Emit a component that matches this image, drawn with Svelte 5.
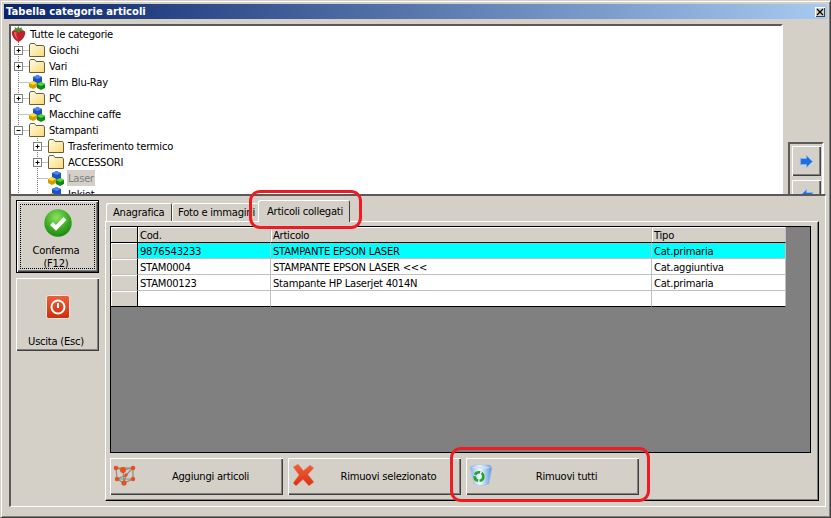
<script>
  const rows = [
    { level: 1, kind: 'folder', exp: '+', label: 'Giochi' },
    { level: 1, kind: 'folder', exp: '+', label: 'Vari' },
    { level: 1, kind: 'cubes', exp: '', label: 'Film Blu-Ray' },
    { level: 1, kind: 'folder', exp: '+', label: 'PC' },
    { level: 1, kind: 'cubes', exp: '', label: 'Macchine caffe' },
    { level: 1, kind: 'folder', exp: '-', label: 'Stampanti' },
    { level: 2, kind: 'folder', exp: '+', label: 'Trasferimento termico' },
    { level: 2, kind: 'folder', exp: '+', label: 'ACCESSORI' },
    { level: 2, kind: 'cubes', exp: '', label: 'Laser', selected: true },
    { level: 2, kind: 'cubes', exp: '', label: 'Inkjet' }
  ];

  const articles = [
    { cod: '9876543233', name: 'STAMPANTE EPSON LASER', tipo: 'Cat.primaria', active: true },
    { cod: 'STAM0004', name: 'STAMPANTE EPSON LASER <<<', tipo: 'Cat.aggiuntiva' },
    { cod: 'STAM00123', name: 'Stampante HP Laserjet 4014N', tipo: 'Cat.primaria' },
    { cod: '', name: '', tipo: '' }
  ];

  const prefixWidth = (level) => (level === 1 ? 18 : 37);
  const expX = (level) => (level === 1 ? 7.5 : 26.5);
</script>

<div class="window">
  <div class="title">
    <span>Tabella categorie articoli</span>
    <div class="close">
      <svg width="8" height="8" viewBox="0 0 8 8"><path d="M1 1l6 6M7 1l-6 6" stroke="#000" stroke-width="1.3" fill="none" /></svg>
    </div>
  </div>

  <div class="top">
    <div class="tree">
      <div class="row">
        <svg class="berry" width="16" height="16" viewBox="0 0 16 16">
          <path d="M1 5.500C3 3.500 12 3.500 14 5.500C15 9 12 14 7.500 16C3 14 0 9 1 5.500Z" fill="#c0202a" />
          <path d="M3 6C2.500 9 5 12 7 14C5.500 10 5 8 5.500 6Z" fill="#e8555a" />
          <path d="M1.500 4.500L4 3L3.500 1L6 2.500L7.500 0L8.500 2.500L11 1L10.500 3L13 4.500L9.500 5L7.500 6.500L5.500 5Z" fill="#4a8a2a" />
        </svg>
        <span class="label root">Tutte le categorie</span>
      </div>

      {#each rows as r}
        <div class="row">
          <svg class="prefix" width={prefixWidth(r.level)} height="16">
            <line x1="7.5" y1="0" x2="7.5" y2="16" class="dots" />
            {#if r.level === 2}
              <line x1="26.5" y1="0" x2="26.5" y2="16" class="dots" />
            {/if}
            <line x1={expX(r.level)} y1="8.5" x2={prefixWidth(r.level)} y2="8.5" class="dots" />
            {#if r.exp}
              <rect x={expX(r.level) - 4} y="4.500" width="8" height="8" fill="#fff" stroke="#808080" />
              <path d="M{expX(r.level) - 2} 8.500h4" stroke="#000" />
              {#if r.exp === '+'}
                <path d="M{expX(r.level)} 6.500v4" stroke="#000" />
              {/if}
            {/if}
          </svg>
          {#if r.kind === 'folder'}
            <svg class="icon" width="16" height="16" viewBox="0 0 16 16">
              <defs>
                <linearGradient id="fold" x1="0" y1="0" x2="1" y2="1">
                  <stop offset="0" stop-color="#fffde8" />
                  <stop offset="1" stop-color="#fbd873" />
                </linearGradient>
              </defs>
              <path d="M0.500 14.500V3L1.500 1.500H5.500L7 3.500H14.500L15.500 5V14.500Z" fill="url(#fold)" stroke="#6b5f33" />
            </svg>
          {:else}
            <svg class="icon" width="16" height="16" viewBox="0 0 16 16">
              <path d="M4 3L8.500 1L13 3V8L8.500 10L4 8Z" fill="#1a50c8" />
              <path d="M4 3L8.500 5L13 3L8.500 1Z" fill="#4a88ea" />
              <path d="M0 9L4 7L8 9V13L4 15L0 13Z" fill="#d0a000" />
              <path d="M0 9L4 11L8 9L4 7Z" fill="#ffdc40" />
              <path d="M8 10L12 8L16 10V14L12 16L8 14Z" fill="#128a12" />
              <path d="M8 10L12 12L16 10L12 8Z" fill="#58d040" />
            </svg>
          {/if}
          <span class="label" class:selected={r.selected}>{r.label}</span>
        </div>
      {/each}
    </div>

    <div class="movers">
      <div class="mover">
        <svg width="13" height="13" viewBox="0 0 13 13">
          <path d="M0.500 3.500H6.500V0.500L12.500 6.500L6.500 12.500V9.500H0.500Z" fill="#1f6fe0" stroke="#7fb2f2" />
        </svg>
      </div>
      <div class="mover">
        <svg width="13" height="13" viewBox="0 0 13 13">
          <path d="M12.500 3.500H6.500V0.500L0.500 6.500L6.500 12.500V9.500H12.500Z" fill="#1f6fe0" stroke="#7fb2f2" />
        </svg>
      </div>
    </div>
  </div>

  <div class="panel">
    <div class="side">
      <button class="big focused">
        <svg width="28" height="28" viewBox="0 0 28 28">
          <defs>
            <radialGradient id="ok" cx="0.45" cy="0.3" r="0.8">
              <stop offset="0" stop-color="#8fe05f" />
              <stop offset="0.6" stop-color="#34a51f" />
              <stop offset="1" stop-color="#157a12" />
            </radialGradient>
          </defs>
          <circle cx="14" cy="14" r="13.700" fill="url(#ok)" />
          <path d="M7.500 14.500L12 19L21 9.500" fill="none" stroke="#fff" stroke-width="4" />
        </svg>
        <span class="big-text">Conferma<br />(F12)</span>
        <i class="focus-ring"></i>
      </button>
      <button class="big">
        <svg width="24" height="24" viewBox="0 0 24 24">
          <defs>
            <linearGradient id="off" x1="0" y1="0" x2="0" y2="1">
              <stop offset="0" stop-color="#f0603a" />
              <stop offset="1" stop-color="#c8300c" />
            </linearGradient>
          </defs>
          <rect x="0.500" y="0.500" width="23" height="23" rx="2" fill="url(#off)" stroke="#f7e4da" />
          <circle cx="12" cy="12" r="6.500" fill="none" stroke="#fff" stroke-width="2" />
          <path d="M12 8v5" stroke="#fff" stroke-width="2" />
        </svg>
        <span class="big-text low">Uscita (Esc)</span>
      </button>
    </div>

    <div class="tabs-area">
      <div class="tabs">
        <div class="tab first">Anagrafica</div>
        <div class="tab second">Foto e immagini</div>
        <div class="tab current">Articoli collegati</div>
      </div>

      <div class="page">
        <div class="grid">
          <div class="table">
            <div class="cell ind head"></div>
            <div class="cell head">Cod.</div>
            <div class="cell head">Articolo</div>
            <div class="cell head">Tipo</div>
            {#each articles as a, i}
              <div class="cell ind" class:last={i === articles.length - 1}></div>
              <div class="cell" class:cyan={a.active} class:last={i === articles.length - 1}>{a.cod}</div>
              <div class="cell" class:cyan={a.active} class:last={i === articles.length - 1}>{a.name}</div>
              <div class="cell" class:cyan={a.active} class:last={i === articles.length - 1}>{a.tipo}</div>
            {/each}
          </div>
        </div>

        <div class="actions">
          <button class="action">
            <svg width="26" height="26" viewBox="0 0 26 26">
              <path d="M4 4H21V15H5ZM4 4L11 6L21 4M11 6L12 19M5 15L12 19L21 15M14 11L21 4M14 11L5 15M14 11L12 19" fill="none" stroke="#8c8c84" stroke-width="1.200" />
              <g fill="#e8501a">
                <circle cx="4" cy="4" r="2.300" />
                <circle cx="21" cy="4" r="2.300" />
                <circle cx="11" cy="6" r="3" />
                <circle cx="14" cy="11" r="1.700" />
                <circle cx="5" cy="15" r="2.200" />
                <circle cx="21" cy="15" r="2.200" />
                <circle cx="12" cy="19" r="2.600" />
              </g>
            </svg>
            <span>Aggiungi articoli</span>
          </button>
          <button class="action">
            <svg width="26" height="26" viewBox="0 0 26 26">
              <defs>
                <linearGradient id="cross" x1="0" y1="0" x2="0" y2="1">
                  <stop offset="0" stop-color="#f2603a" />
                  <stop offset="1" stop-color="#d8320f" />
                </linearGradient>
              </defs>
              <path d="M3 3L8 0L13.500 6.500L20 1L24 4L18 10.500L24 18L19 22L13 15.500L6 22L3 19L9 11Z" fill="url(#cross)" stroke="#e0a090" stroke-width="0.500" />
            </svg>
            <span>Rimuovi selezionato</span>
          </button>
          <button class="action">
            <svg width="26" height="26" viewBox="0 0 26 26">
              <defs>
                <linearGradient id="bin" x1="0" y1="0" x2="1" y2="0">
                  <stop offset="0" stop-color="#7fb0e8" />
                  <stop offset="0.45" stop-color="#f4f9ff" />
                  <stop offset="1" stop-color="#5f94d8" />
                </linearGradient>
              </defs>
              <path d="M2 3L7 0.500L22 1L24 4L21 20C16 22 10 22 6 20Z" fill="url(#bin)" stroke="#a8c4e4" stroke-width="0.700" />
              <path d="M3 3.500C9 5 18 5 23 3.500C18 2 8 2 3 3.500Z" fill="#cfe2f6" />
              <circle cx="11" cy="12.500" r="4.300" fill="none" stroke="#22a522" stroke-width="2.600" stroke-dasharray="6 1.500" />
            </svg>
            <span>Rimuovi tutti</span>
          </button>
        </div>
      </div>
    </div>
  </div>

  <div class="mark mark-tab"></div>
  <div class="mark mark-all"></div>
</div>

<style>
  :global(body) {
    margin: 0;
    background: #d4d0c8;
  }

  .window {
    position: relative;
    box-sizing: border-box;
    width: 831px;
    height: 518px;
    padding: 3px;
    background: #d4d0c8;
    border: 1px solid;
    border-color: #d4d0c8 #404040 #404040 #d4d0c8;
    box-shadow: inset 1px 1px 0 #fff, inset -1px -1px 0 #808080;
    font: 10px/15px "DejaVu Sans", sans-serif;
    letter-spacing: -0.25px;
    color: #000;
    overflow: hidden;
  }

  .title {
    height: 15px;
    display: flex;
    align-items: center;
    justify-content: space-between;
    padding: 0 2px;
    background: linear-gradient(to right, #0a246a, #a6caf0);
    color: #fff;
    font-weight: bold;
    letter-spacing: 0;
  }

  .close {
    width: 10px;
    height: 10px;
    display: flex;
    align-items: center;
    justify-content: center;
    background: #d4d0c8;
    box-shadow: inset 1px 1px 0 #fff, inset -1px -1px 0 #404040;
  }

  .top {
    display: flex;
    height: 175px;
    padding: 5px 0 0 5px;
    box-sizing: border-box;
    overflow: hidden;
  }

  .tree {
    box-sizing: border-box;
    width: 774px;
    height: 170px;
    flex: none;
    background: #fff;
    border: 2px solid;
    border-color: #5a5a5a #fff #fff #5a5a5a;
    border-bottom: 0;
    overflow: hidden;
  }

  .row {
    display: flex;
    height: 16px;
    align-items: center;
    white-space: nowrap;
  }

  .prefix,
  .icon,
  .berry {
    flex: none;
    display: block;
  }

  .dots {
    stroke: #808080;
    stroke-dasharray: 1 1;
  }

  .label {
    margin-left: 3px;
    padding: 1px 1px 0;
    box-sizing: border-box;
    height: 16px;
    line-height: 16px;
  }

  .label.root {
    margin-left: 2px;
  }

  .label.selected {
    background: #d4d0c8;
    color: #808080;
  }

  .movers {
    margin: 118px 0 0 5px;
    width: 36px;
    height: 90px;
    flex: none;
    box-sizing: border-box;
    padding: 2px;
    border: 2px solid;
    border-color: #5a5a5a #fff #fff #5a5a5a;
    display: flex;
    flex-direction: column;
    gap: 4px;
  }

  .mover {
    width: 29px;
    height: 30px;
    flex: none;
    display: flex;
    align-items: center;
    justify-content: center;
    box-shadow: inset 1px 1px 0 #fff, inset -1px -1px 0 #404040, inset -2px -2px 0 #808080;
  }

  .panel {
    display: flex;
    box-sizing: border-box;
    width: 817px;
    height: 313px;
    margin-left: 5px;
    background: #d4d0c8;
    border: 2px solid;
    border-color: #5a5a5a #fff #fff #5a5a5a;
    border-width: 2px 1px 1px 2px;
    padding: 4px 6px 5px 5px;
    gap: 6px;
  }

  .side {
    width: 83px;
    flex: none;
    display: flex;
    flex-direction: column;
    gap: 5px;
  }

  button {
    font: inherit;
    letter-spacing: inherit;
    color: inherit;
    background: #d4d0c8;
    border: 0;
    margin: 0;
    padding: 0;
    box-shadow: inset 1px 1px 0 #fff, inset -1px -1px 0 #404040, inset -2px -2px 0 #808080;
  }

  .big {
    position: relative;
    height: 73px;
    display: flex;
    flex-direction: column;
    align-items: center;
    padding-top: 9px;
    box-sizing: border-box;
  }

  .big svg {
    flex: none;
  }

  .big.focused {
    border: 1px solid #000;
    padding-top: 8px;
  }

  .big:not(.focused) svg {
    margin-top: 8px;
  }

  .big-text {
    margin-top: 7px;
    padding-right: 3px;
    line-height: 13px;
    text-align: center;
  }

  .big-text.low {
    margin-top: 16px;
  }

  .focus-ring {
    position: absolute;
    inset: 3px 3px 3px 3px;
    border: 1px dotted #000;
  }

  .tabs-area {
    flex: 1;
    display: flex;
    flex-direction: column;
    min-width: 0;
  }

  .tabs {
    display: flex;
    align-items: flex-end;
    height: 21px;
    padding-left: 1px;
    flex: none;
    position: relative;
    z-index: 1;
  }

  .tab {
    box-sizing: border-box;
    height: 18px;
    line-height: 19px;
    padding-left: 7px;
    white-space: nowrap;
    overflow: hidden;
    background: #d4d0c8;
    border-radius: 2px 2px 0 0;
    box-shadow: inset 1px 1px 0 #fff, inset -1px 0 0 #404040;
  }

  .tab.first {
    width: 66px;
  }

  .tab.second {
    width: 86px;
    padding-left: 6px;
    box-shadow: inset 1px 1px 0 #fff;
  }

  .tab.current {
    width: 92px;
    height: 22px;
    margin-bottom: -1px;
    padding-left: 9px;
    line-height: 24px;
  }

  .page {
    flex: 1;
    display: flex;
    flex-direction: column;
    gap: 5px;
    box-sizing: border-box;
    padding: 4px 7px 5px 4px;
    border: 1px solid;
    border-color: #fff #000 #000 #fff;
    box-shadow: inset -1px -1px 0 #808080;
  }

  .grid {
    flex: 1;
    box-sizing: border-box;
    background: #808080;
    border: 1px solid #000;
  }

  .table {
    display: grid;
    grid-template-columns: 27px 133px 381px 134px;
    grid-auto-rows: 16px;
    width: 675px;
  }

  .cell {
    box-sizing: border-box;
    padding: 1px 0 0 2px;
    line-height: 15px;
    white-space: nowrap;
    overflow: hidden;
    background: #fff;
    border-right: 1px solid #c0c0c0;
    border-bottom: 1px solid #c0c0c0;
  }

  .cell.head {
    background: #d4d0c8;
    border-bottom-color: #000;
    box-shadow: inset 1px 1px 0 #fff;
  }

  .cell.ind {
    background: #d4d0c8;
    border-right-color: #000;
    box-shadow: inset 1px 1px 0 #fff;
  }

  .cell.cyan {
    background: #00ffff;
  }

  .cell.last {
    border-bottom-color: #000;
  }

  .actions {
    display: flex;
    gap: 5px;
    height: 37px;
    flex: none;
  }

  .action {
    width: 173px;
    display: flex;
    align-items: center;
    padding-left: 2px;
  }

  .action svg {
    flex: none;
  }

  .action span {
    flex: 1;
    text-align: center;
  }

  .mark {
    position: absolute;
    box-sizing: border-box;
    border: 3px solid #ed1c24;
    border-radius: 11px;
    z-index: 2;
  }

  .mark-tab {
    left: 248px;
    top: 189px;
    width: 113px;
    height: 39px;
  }

  .mark-all {
    left: 449px;
    top: 446px;
    width: 200px;
    height: 55px;
  }
</style>
